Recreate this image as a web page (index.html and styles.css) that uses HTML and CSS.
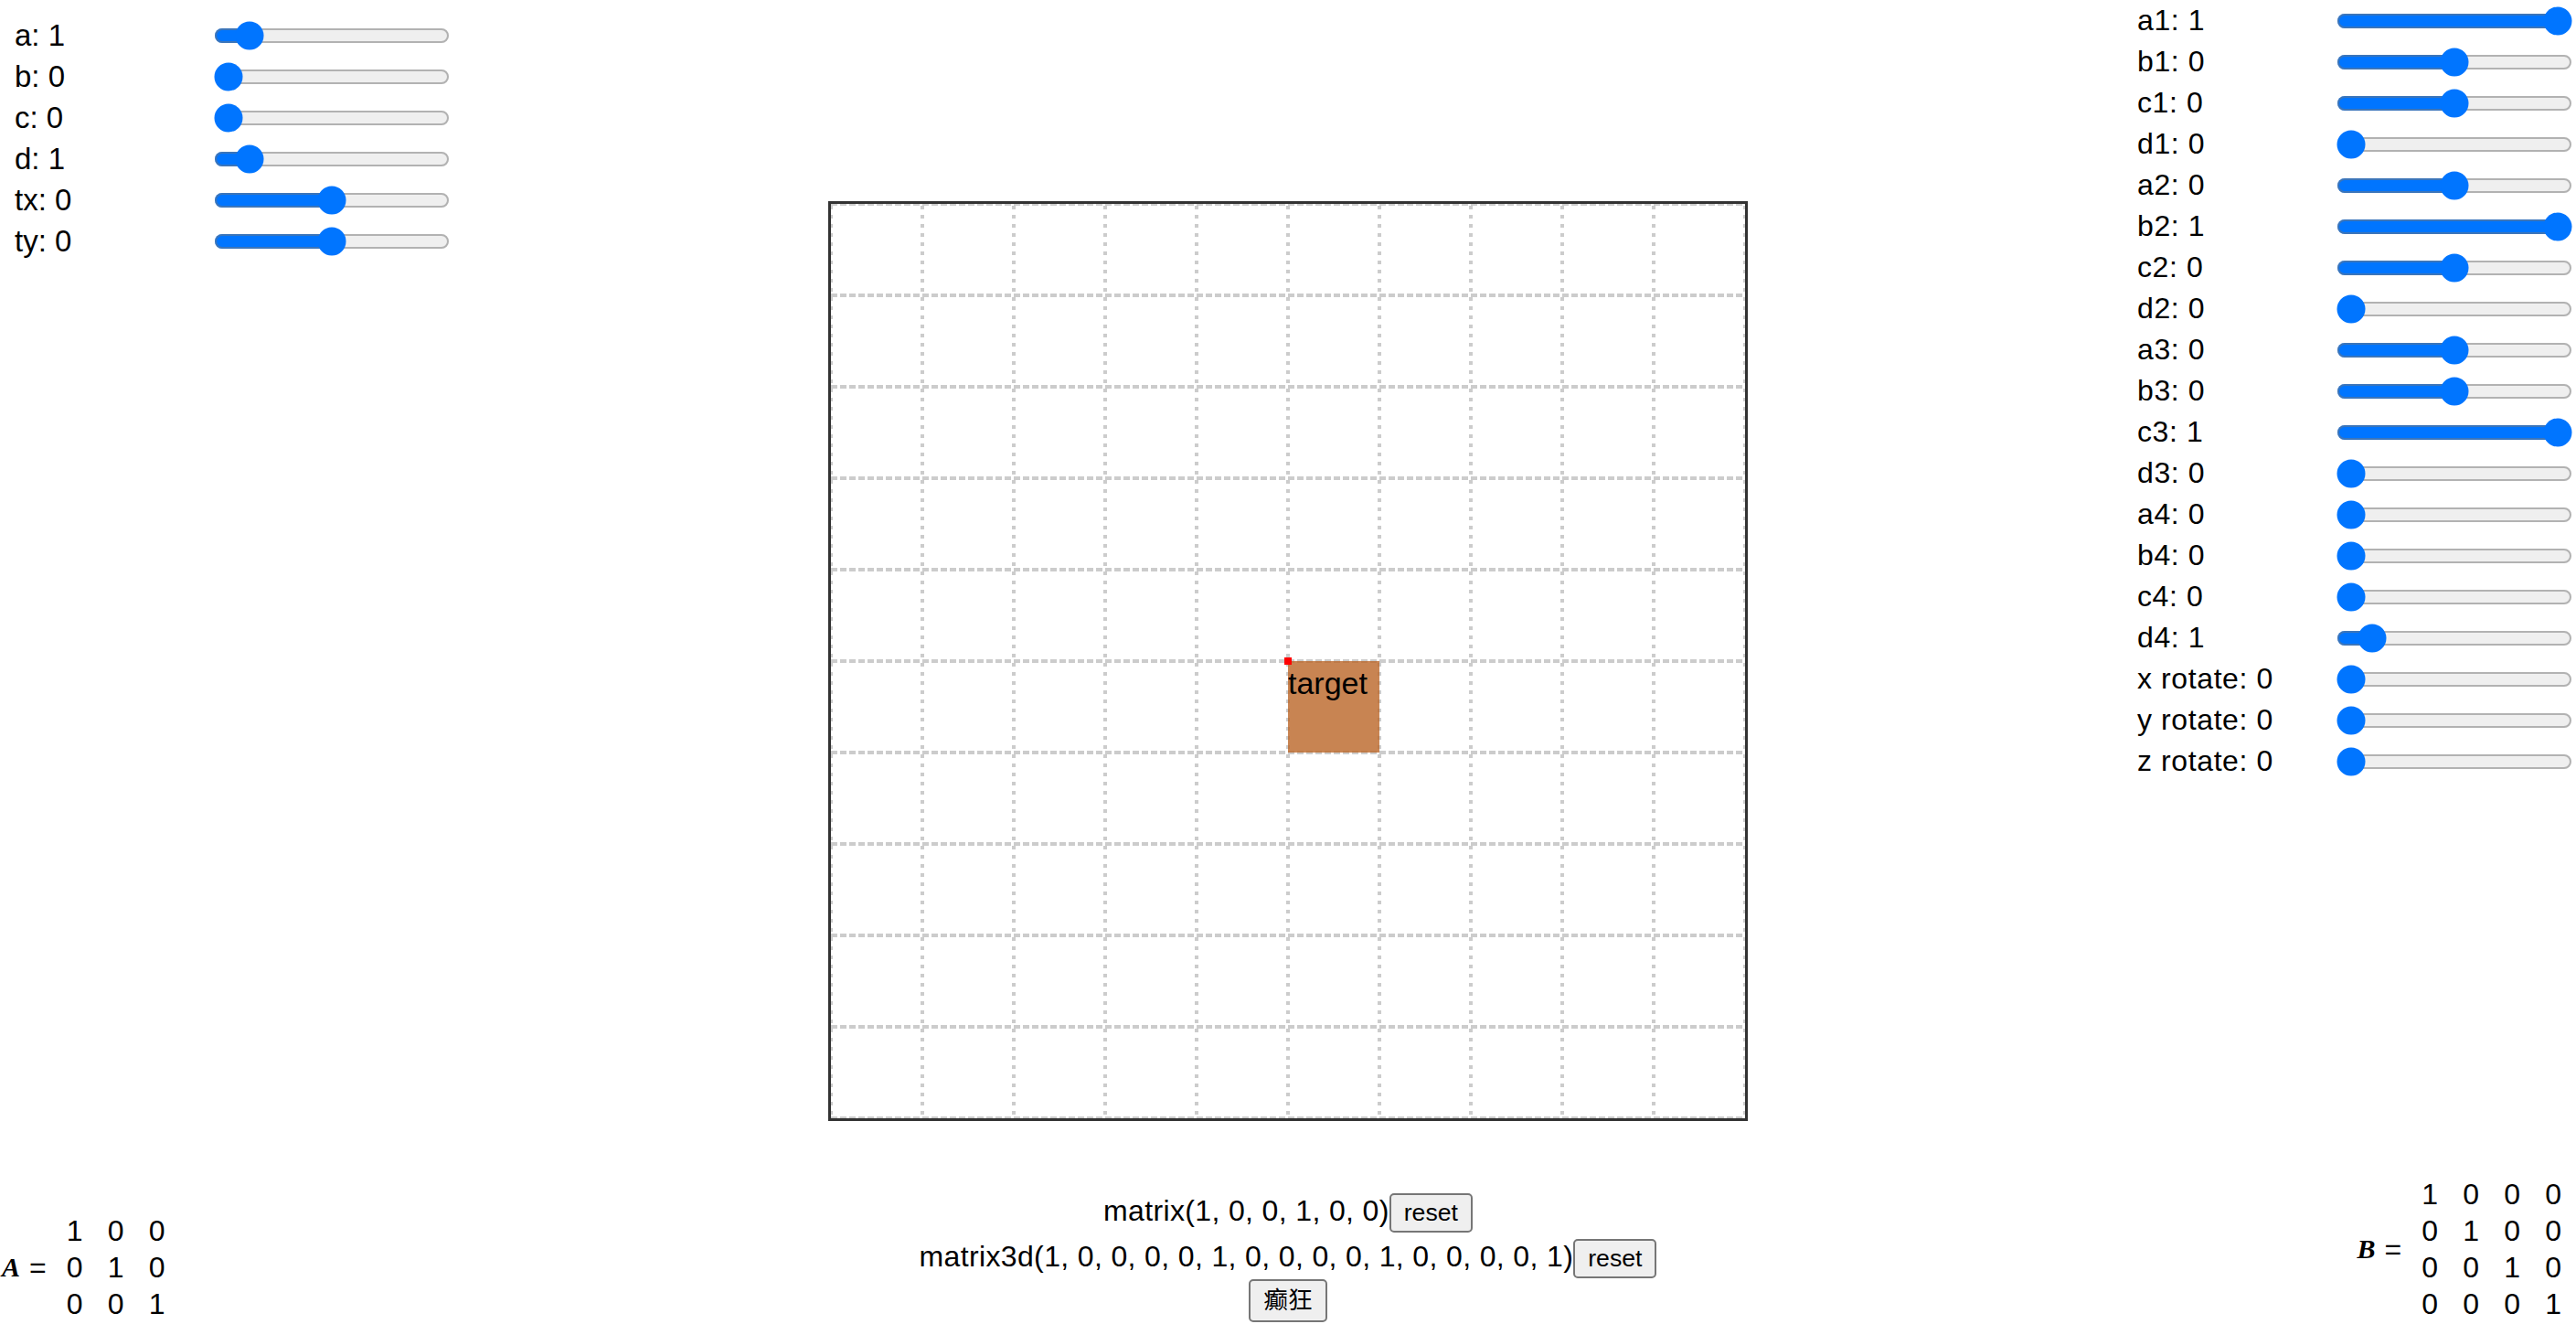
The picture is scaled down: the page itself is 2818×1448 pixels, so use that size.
FILE: index.html
```html
<!DOCTYPE html>
<html lang="zh">
<head>
<meta charset="utf-8">
<title>matrix</title>
<link rel="stylesheet" href="styles.css">
</head>
<body>
<div class="top">
  <div class="panel panel-left">
    <div class="row"><span class="label">a: 1</span><input type="range" min="0" max="10" value="1"></div>
    <div class="row"><span class="label">b: 0</span><input type="range" min="0" max="10" value="0"></div>
    <div class="row"><span class="label">c: 0</span><input type="range" min="0" max="10" value="0"></div>
    <div class="row"><span class="label">d: 1</span><input type="range" min="0" max="10" value="1"></div>
    <div class="row"><span class="label">tx: 0</span><input type="range" min="-100" max="100" value="0"></div>
    <div class="row"><span class="label">ty: 0</span><input type="range" min="-100" max="100" value="0"></div>
  </div>
  <div class="stage">
    <div class="grid">
      <div class="cell"></div><div class="cell"></div><div class="cell"></div><div class="cell"></div><div class="cell"></div><div class="cell"></div><div class="cell"></div><div class="cell"></div><div class="cell"></div><div class="cell"></div>
      <div class="cell"></div><div class="cell"></div><div class="cell"></div><div class="cell"></div><div class="cell"></div><div class="cell"></div><div class="cell"></div><div class="cell"></div><div class="cell"></div><div class="cell"></div>
      <div class="cell"></div><div class="cell"></div><div class="cell"></div><div class="cell"></div><div class="cell"></div><div class="cell"></div><div class="cell"></div><div class="cell"></div><div class="cell"></div><div class="cell"></div>
      <div class="cell"></div><div class="cell"></div><div class="cell"></div><div class="cell"></div><div class="cell"></div><div class="cell"></div><div class="cell"></div><div class="cell"></div><div class="cell"></div><div class="cell"></div>
      <div class="cell"></div><div class="cell"></div><div class="cell"></div><div class="cell"></div><div class="cell"></div><div class="cell"></div><div class="cell"></div><div class="cell"></div><div class="cell"></div><div class="cell"></div>
      <div class="cell"></div><div class="cell"></div><div class="cell"></div><div class="cell"></div><div class="cell"></div><div class="cell"></div><div class="cell"></div><div class="cell"></div><div class="cell"></div><div class="cell"></div>
      <div class="cell"></div><div class="cell"></div><div class="cell"></div><div class="cell"></div><div class="cell"></div><div class="cell"></div><div class="cell"></div><div class="cell"></div><div class="cell"></div><div class="cell"></div>
      <div class="cell"></div><div class="cell"></div><div class="cell"></div><div class="cell"></div><div class="cell"></div><div class="cell"></div><div class="cell"></div><div class="cell"></div><div class="cell"></div><div class="cell"></div>
      <div class="cell"></div><div class="cell"></div><div class="cell"></div><div class="cell"></div><div class="cell"></div><div class="cell"></div><div class="cell"></div><div class="cell"></div><div class="cell"></div><div class="cell"></div>
      <div class="cell"></div><div class="cell"></div><div class="cell"></div><div class="cell"></div><div class="cell"></div><div class="cell"></div><div class="cell"></div><div class="cell"></div><div class="cell"></div><div class="cell"></div>
    </div>
    <div class="target">target<span class="origin"></span></div>
  </div>
  <div class="panel panel-right">
    <div class="row"><span class="label">a1: 1</span><input type="range" min="-1" max="1" step="0.01" value="1"></div>
    <div class="row"><span class="label">b1: 0</span><input type="range" min="-1" max="1" step="0.01" value="0"></div>
    <div class="row"><span class="label">c1: 0</span><input type="range" min="-1" max="1" step="0.01" value="0"></div>
    <div class="row"><span class="label">d1: 0</span><input type="range" min="0" max="10" value="0"></div>
    <div class="row"><span class="label">a2: 0</span><input type="range" min="-1" max="1" step="0.01" value="0"></div>
    <div class="row"><span class="label">b2: 1</span><input type="range" min="-1" max="1" step="0.01" value="1"></div>
    <div class="row"><span class="label">c2: 0</span><input type="range" min="-1" max="1" step="0.01" value="0"></div>
    <div class="row"><span class="label">d2: 0</span><input type="range" min="0" max="10" value="0"></div>
    <div class="row"><span class="label">a3: 0</span><input type="range" min="-1" max="1" step="0.01" value="0"></div>
    <div class="row"><span class="label">b3: 0</span><input type="range" min="-1" max="1" step="0.01" value="0"></div>
    <div class="row"><span class="label">c3: 1</span><input type="range" min="-1" max="1" step="0.01" value="1"></div>
    <div class="row"><span class="label">d3: 0</span><input type="range" min="0" max="10" value="0"></div>
    <div class="row"><span class="label">a4: 0</span><input type="range" min="0" max="10" value="0"></div>
    <div class="row"><span class="label">b4: 0</span><input type="range" min="0" max="10" value="0"></div>
    <div class="row"><span class="label">c4: 0</span><input type="range" min="0" max="10" value="0"></div>
    <div class="row"><span class="label">d4: 1</span><input type="range" min="0" max="10" value="1"></div>
    <div class="row"><span class="label">x rotate: 0</span><input type="range" min="0" max="360" value="0"></div>
    <div class="row"><span class="label">y rotate: 0</span><input type="range" min="0" max="360" value="0"></div>
    <div class="row"><span class="label">z rotate: 0</span><input type="range" min="0" max="360" value="0"></div>
  </div>
</div>
<div class="bottom">
  <div class="mat mat-a">
    <span class="var">A</span><span class="eq">=</span>
    <div class="nums nums-3">
      <span>1</span><span>0</span><span>0</span>
      <span>0</span><span>1</span><span>0</span>
      <span>0</span><span>0</span><span>1</span>
    </div>
  </div>
  <div class="output">
    <div class="line">matrix(1, 0, 0, 1, 0, 0)<button class="btn">reset</button></div>
    <div class="line">matrix3d(1, 0, 0, 0, 0, 1, 0, 0, 0, 0, 1, 0, 0, 0, 0, 1)<button class="btn">reset</button></div>
    <div class="line"><button class="btn btn-crazy">癫狂</button></div>
  </div>
  <div class="mat mat-b">
    <span class="var">B</span><span class="eq">=</span>
    <div class="nums nums-4">
      <span>1</span><span>0</span><span>0</span><span>0</span>
      <span>0</span><span>1</span><span>0</span><span>0</span>
      <span>0</span><span>0</span><span>1</span><span>0</span>
      <span>0</span><span>0</span><span>0</span><span>1</span>
    </div>
  </div>
</div>
</body>
</html>
```

FILE: styles.css
```css
html {
  zoom: 2;
  overflow: hidden;
}

body {
  margin: 0;
  font-family: "Liberation Sans", "Noto Sans CJK SC", sans-serif;
  font-size: 16px;
  color: #000;
  background: #fff;
}

.top {
  display: grid;
  grid-template-columns: 1fr auto 1fr;
  align-items: start;
}

.panel-left {
  justify-self: start;
  margin: 8px 0 0 8px;
}

.panel-right {
  justify-self: end;
}

.row {
  display: flex;
  align-items: center;
  height: 22.5px;
}

.label {
  flex: none;
  width: 107px;
  white-space: nowrap;
}

.panel-left .label {
  font-size: 16.5px;
}

.panel-right .label {
  letter-spacing: 0.3px;
}

.row input {
  margin: 2px;
  width: 129px;
}

.stage {
  position: relative;
  margin-top: 110px;
  width: 500px;
  height: 500px;
  border: 1.5px solid #333;
}

.grid {
  display: grid;
  grid-template-columns: repeat(10, 50px);
  grid-template-rows: repeat(10, 50px);
}

.cell {
  background:
    repeating-linear-gradient(to right, #ccc 0 3.4px, transparent 3.4px 5px) left top / 100% 1px no-repeat,
    repeating-linear-gradient(to right, #ccc 0 3.4px, transparent 3.4px 5px) left bottom / 100% 1px no-repeat,
    repeating-linear-gradient(to bottom, transparent 0 1px, #ccc 1px 3px, transparent 3px 5px) left top / 1px 100% no-repeat,
    repeating-linear-gradient(to bottom, transparent 0 1px, #ccc 1px 3px, transparent 3px 5px) right top / 1px 100% no-repeat;
}

.target {
  position: absolute;
  left: 250px;
  top: 250px;
  width: 50px;
  height: 50px;
  background: rgba(186, 101, 39, 0.8);
  font-size: 17px;
  line-height: 24px;
}

.origin {
  position: absolute;
  left: -2px;
  top: -2px;
  width: 4px;
  height: 4px;
  background: #f00;
}

.bottom {
  display: grid;
  grid-template-columns: 1fr auto 1fr;
  align-items: end;
  margin-top: 30px;
}

.mat {
  display: flex;
  align-items: center;
}

.mat-a {
  justify-self: start;
  margin-left: 1px;
}

.mat-b {
  justify-self: end;
  margin-right: 8px;
}

.var {
  font-family: "Liberation Serif", serif;
  font-style: italic;
  font-weight: bold;
  font-size: 15px;
  margin-right: 5px;
}

.eq {
  margin-right: 11px;
}

.nums {
  display: grid;
  column-gap: 13.6px;
  line-height: 20px;
}

.nums-3 {
  grid-template-columns: repeat(3, auto);
}

.nums-4 {
  grid-template-columns: repeat(4, auto);
}

.output {
  text-align: center;
}

.line {
  line-height: 22px;
  letter-spacing: 0.18px;
}

.line:first-child {
  margin-top: -2px;
  margin-bottom: 2px;
}

.btn {
  font-family: "Liberation Sans", "Noto Sans CJK SC", sans-serif;
  font-size: 13.333px;
  letter-spacing: 0;
}

.btn-crazy {
  line-height: 17.5px;
}
```
